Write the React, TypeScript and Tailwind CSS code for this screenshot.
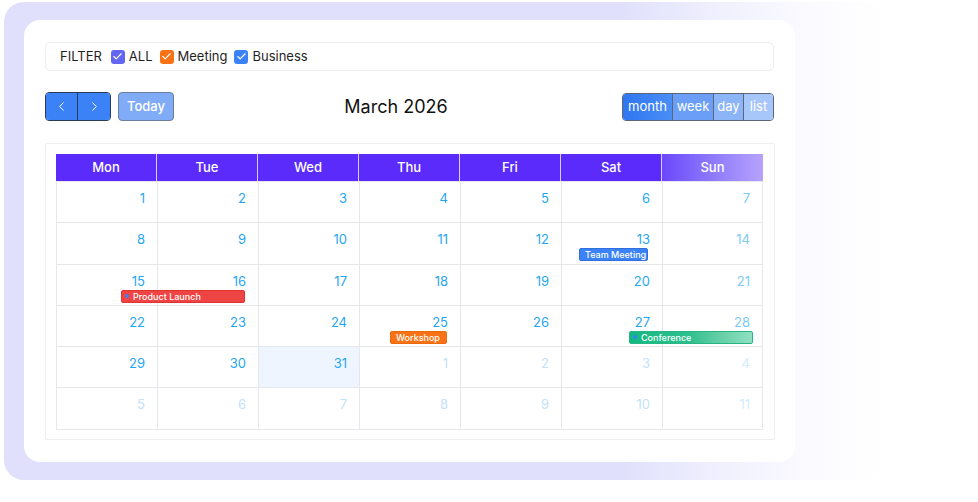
import React from 'react';
import { ChevronLeft, ChevronRight, Check } from 'lucide-react';

type Day = { n: number; muted?: boolean; today?: boolean };

const days = ['Mon', 'Tue', 'Wed', 'Thu', 'Fri', 'Sat', 'Sun'];

// 6 weeks shown Mon-first, trailing days of April muted
const weeks: Day[][] = [
  [1, 2, 3, 4, 5, 6, 7].map((n) => ({ n })),
  [8, 9, 10, 11, 12, 13, 14].map((n) => ({ n })),
  [15, 16, 17, 18, 19, 20, 21].map((n) => ({ n })),
  [22, 23, 24, 25, 26, 27, 28].map((n) => ({ n })),
  [
    { n: 29 },
    { n: 30 },
    { n: 31, today: true },
    { n: 1, muted: true },
    { n: 2, muted: true },
    { n: 3, muted: true },
    { n: 4, muted: true },
  ],
  [5, 6, 7, 8, 9, 10, 11].map((n) => ({ n, muted: true })),
];

type CalEvent = { title: string; left: number; width: number; cls: string; dot?: boolean };

const events: Record<number, CalEvent[]> = {
  1: [{ title: 'Team Meeting', left: 523, width: 69, cls: 'bg-[#3b82f6] border-[#2f6fe0]' }],
  2: [{ title: 'Product Launch', left: 65, width: 124, cls: 'bg-[#ef4444] border-[#e03434]', dot: true }],
  3: [
    { title: 'Workshop', left: 334, width: 57, cls: 'bg-[#f97316] border-[#ea6a0e]' },
    {
      title: 'Conference',
      left: 573,
      width: 124,
      cls: 'bg-gradient-to-r from-[#10b981] via-[#2fc08f] to-[#8fe0c2] border-[#27b584]',
      dot: true,
    },
  ],
};

const FilterBox = ({ label, color }: { label: string; color: string }) => (
  <label className="flex items-center gap-[4px]">
    <span className={`w-[14px] h-[14px] rounded-[3px] flex items-center justify-center ${color}`}>
      <Check size={11} strokeWidth={2.5} className="text-white" />
    </span>
    <span>{label}</span>
  </label>
);

const numColor = (d: Day, col: number) => {
  if (d.muted) return col === 6 ? 'text-[#d3ecfc]' : 'text-[#bfe3fb]';
  return col === 6 ? 'text-[#7dcaf6]' : 'text-[#1fa6f2]';
};

export default function App() {
  return (
    <div className="w-[978px] h-[502px] bg-white overflow-hidden font-['Inter',sans-serif]">
      <div className="ml-[4px] mt-[2px] w-[880px] h-[478px] rounded-[20px] pl-[20px] pt-[18px] bg-[linear-gradient(to_right,#e0e0fc_0%,#e0e0fc_70%,#f1f1fe_82%,#fbfbff_92%,rgba(255,255,255,0)_100%)]">
        <div className="w-[771px] h-[442px] bg-white rounded-[16px] px-[21px] pt-[22px]">
          {/* Filter */}
          <div className="h-[29px] border border-[#ececf1] rounded-[5px] px-[14px] flex items-center gap-[7px] text-[13px] text-[#1f1f1f]">
            <span className="mr-[2px]">FILTER</span>
            <FilterBox label="ALL" color="bg-[#6366f1]" />
            <FilterBox label="Meeting" color="bg-[#f97316]" />
            <FilterBox label="Business" color="bg-[#3b82f6]" />
          </div>

          {/* Toolbar */}
          <div className="mt-[21px] h-[29px] flex items-center justify-between">
            <div className="flex items-center gap-[7px]">
              <div className="flex h-[29px] rounded-[4px] border border-[#2b3a55] overflow-hidden">
                <button className="w-[32px] bg-[#3b82f6] flex items-center justify-center border-r border-[#2b3a55]">
                  <ChevronLeft size={15} strokeWidth={1.6} className="text-white" />
                </button>
                <button className="w-[32px] bg-[#3b82f6] flex items-center justify-center">
                  <ChevronRight size={15} strokeWidth={1.6} className="text-white" />
                </button>
              </div>
              <button className="h-[29px] w-[56px] rounded-[4px] bg-[#80abf7] border border-[#6b7f9c] text-white text-[13px] font-medium">
                Today
              </button>
            </div>
            <div className="text-[18px] text-[#111] mr-[4px]">March 2026</div>
            <div className="flex h-[28px] rounded-[4px] border border-[#5c6677] overflow-hidden text-white text-[13px]">
              <button className="w-[50px] bg-gradient-to-r from-[#2f76f0] to-[#4a8ef7] border-r border-[#5c6677]">month</button>
              <button className="w-[41px] bg-[#6b9ff7] border-r border-[#5c6677]">week</button>
              <button className="w-[30px] bg-[#8cb5f8] border-r border-[#5c6677]">day</button>
              <button className="w-[29px] bg-[#a7c6fa]">list</button>
            </div>
          </div>

          {/* Calendar */}
          <div className="mt-[22px] w-[730px] h-[297px] border border-[#ededf2] rounded-[2px] pl-[10px] pr-[11px] pt-[10px]">
            <div className="w-[707px] border-b border-[#e6e7ec]">
              <div className="grid grid-cols-7 h-[27px]">
                {days.map((d, i) => (
                  <div
                    key={d}
                    className={`flex items-center justify-center text-white text-[13px] font-medium border-r border-[#d7cdfd] ${
                      i === 6
                        ? 'bg-gradient-to-r from-[#6c46fb] to-[#b7a2fb] border-r-0'
                        : 'bg-[#5b2bfc]'
                    }`}
                  >
                    {d}
                  </div>
                ))}
              </div>
              {weeks.map((w, wi) => (
                <div key={wi} className="relative grid grid-cols-7 h-[41.3px] border-t border-[#e6e7ec]">
                  {w.map((d, di) => (
                    <div
                      key={di}
                      className={`border-l border-[#e6e7ec] ${di === 6 ? 'border-r' : ''} ${
                        d.today ? 'bg-[#eef5ff]' : ''
                      } text-right pr-[12px] pt-[7px] text-[13px] ${numColor(d, di)}`}
                    >
                      {d.n}
                    </div>
                  ))}
                  {(events[wi] || []).map((e) => (
                    <div
                      key={e.title}
                      className={`absolute top-[25px] h-[13px] rounded-[2px] border text-white text-[9px] font-medium flex items-center leading-none ${e.cls} ${
                        e.dot ? 'pl-[3px]' : 'pl-[5px]'
                      }`}
                      style={{ left: e.left, width: e.width }}
                    >
                      {e.dot && <span className="w-[4px] h-[4px] rounded-full bg-[#3b82f6] mr-[4px]" />}
                      {e.title}
                    </div>
                  ))}
                </div>
              ))}
            </div>
          </div>
        </div>
      </div>
    </div>
  );
}
